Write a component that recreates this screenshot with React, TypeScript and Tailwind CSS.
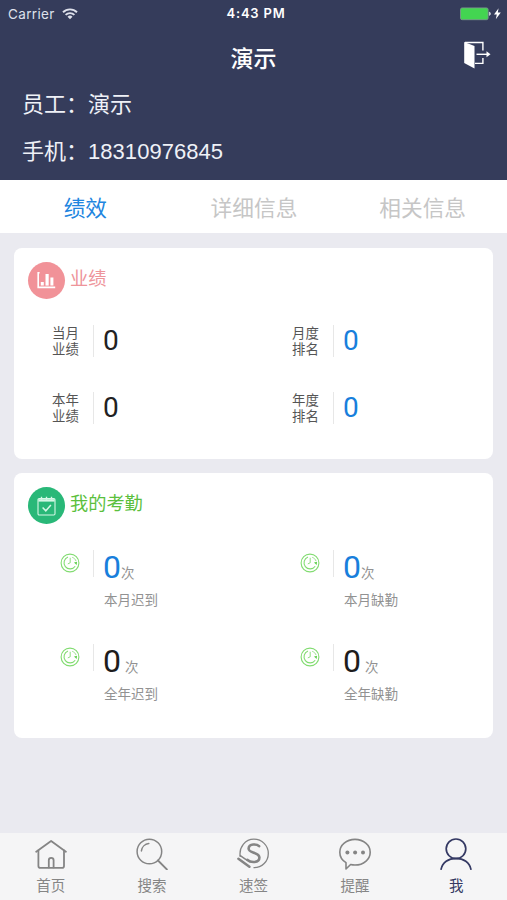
import type { ReactNode } from "react";
import clsx from "clsx";

const performance = [
  { label: ["当月", "业绩"], value: 0, highlight: false },
  { label: ["月度", "排名"], value: 0, highlight: true },
  { label: ["本年", "业绩"], value: 0, highlight: false },
  { label: ["年度", "排名"], value: 0, highlight: true },
];

const attendance = [
  { label: "本月迟到", value: 0, highlight: true },
  { label: "本月缺勤", value: 0, highlight: true },
  { label: "全年迟到", value: 0, highlight: false },
  { label: "全年缺勤", value: 0, highlight: false },
];

function WifiIcon() {
  return (
    <svg className="w-4 h-3" viewBox="0 0 16 12" fill="none" stroke="currentColor" strokeWidth={1.9}>
      <path d="M1 4.2a10 10 0 0 1 14 0" />
      <path d="M3.6 6.9a6.3 6.3 0 0 1 8.8 0" />
      <path d="M8 11.3 5.5 8.8a3.5 3.5 0 0 1 5 0z" fill="currentColor" stroke="none" />
    </svg>
  );
}

function BatteryIcon() {
  return (
    <svg className="w-[42px] h-[14px]" viewBox="0 0 42 14">
      <rect x="0.5" y="0.9" width="27.6" height="11.8" rx="1.6" fill="#43d551" stroke="#7f9a92" strokeWidth="0.8" />
      <path d="M29.3 5.1c1.6.3 1.6 3.1 0 3.4z" fill="#e5e8ef" stroke="#e5e8ef" strokeWidth="0.5" />
      <path d="M38.6 1.2 34 7.4h2.8l-1 4.8 5-6.6h-3z" fill="#fff" />
    </svg>
  );
}

function LogoutIcon() {
  return (
    <svg className="w-7 h-7" viewBox="0 0 28 28" fill="none" stroke="#fff" strokeWidth={1.4}>
      <path d="M1.2.9 11.5 5v22.5L1.2 22z" fill="#fff" stroke="none" />
      <path d="M2 1.5h17.9v8M19.9 17v5.4H12" />
      <path d="M13.5 13.3h12" />
      <path d="m23.5 10.3 4 3-4 3z" fill="#fff" stroke="none" />
    </svg>
  );
}

function ChartIcon() {
  return (
    <svg className="w-[19px] h-[17px]" viewBox="0 0 19 17" fill="none" stroke="#fff">
      <path d="M2.6.8H1.2v14.6h17" strokeWidth={1.6} />
      <path d="M5.3 10v3.6M14.9 5.5v8.1" strokeWidth={3} />
      <path d="M10.1 2v11.6" strokeWidth={3.2} />
    </svg>
  );
}

function CalendarIcon() {
  return (
    <svg className="w-[19px] h-[20px]" viewBox="0 0 19 20" fill="none" stroke="#d5f7e6" strokeWidth={1.1}>
      <rect x="1" y="2.6" width="17" height="16.4" rx="1.2" />
      <path d="M1.4 3.2h16.2v2.4H1.4z" fill="#d5f7e6" stroke="none" />
      <path d="M4.5.8v3M9.5.8v3M14.5.8v3" strokeWidth={1.4} />
      <path d="m5.6 11.5 3.2 3.3 5.1-5.7" strokeWidth={1.5} />
    </svg>
  );
}

function ClockIcon() {
  return (
    <svg className="w-5 h-5" viewBox="0 0 20 20" fill="none" stroke="#82dc71" strokeWidth={1.1}>
      <circle cx="10" cy="10" r="8.9" />
      <path d="M8 4.1a6.1 6.1 0 1 0 7.2 9.1" />
      <path d="M12.2 4.3c2 .8 3.3 2 3.8 3.7" strokeWidth={0.8} />
      <path d="M10.2 4.8v5l-2.4 1.1" strokeWidth={0.9} />
      <path d="m14 9.4 3-.7-.4 3.2z" fill="#62cf50" stroke="none" />
    </svg>
  );
}

function HomeIcon() {
  return (
    <svg className="w-8 h-8" viewBox="0 0 32 32" fill="none" stroke="currentColor" strokeWidth={1.8} strokeLinecap="round" strokeLinejoin="round">
      <path d="M1.2 13.7 16.1 3l14.8 10.7" />
      <path d="M3.4 12.4v15.5c0 1.2.7 1.9 1.9 1.9h21.8c1.2 0 1.9-.7 1.9-1.9V12.4" />
      <path d="M13.8 29.4v-7.2a2.4 2.4 0 0 1 4.8 0v7.2" />
    </svg>
  );
}

function SearchIcon() {
  return (
    <svg className="w-8 h-8" viewBox="0 0 32 32" fill="none" stroke="currentColor" strokeWidth={1.5} strokeLinecap="round">
      <circle cx="13.4" cy="13.5" r="12.3" />
      <path d="M5.4 12.9a8.2 8.2 0 0 1 7.4-7.3" />
      <path d="m22 22.5 8.9 9" strokeWidth={1.8} />
    </svg>
  );
}

function SignIcon() {
  return (
    <svg className="w-8 h-8" viewBox="0 0 32 32" fill="none" stroke="currentColor" strokeWidth={1.5} strokeLinecap="round">
      <path d="M3.2 18.4C1.8 9.2 8.2 1.2 17 1.2c8 0 14.3 6.3 14.3 14.2 0 8-6.3 14.3-14.3 14.3" strokeWidth={1.3} />
      <path d="M22.1 8.2C20 6 12 5.2 11.6 10.5c-.3 5 10.8 3.4 10.8 9 0 5.8-8.8 5.4-12.2 2.3" strokeWidth={2.6} />
      <path d="M3.3 17.6c3 2.4 6.6 4.7 10.1 6" strokeWidth={1.4} />
      <path d="m1.4 20.8 11 7.9" strokeWidth={2.5} />
    </svg>
  );
}

function MessageIcon() {
  return (
    <svg className="w-8 h-8" viewBox="0 0 32 32" fill="none" stroke="currentColor" strokeWidth={1.6} strokeLinejoin="round">
      <path d="M16 1.4c8.5 0 15.2 5.6 15.2 12.8S24.5 27 16 27c-1.5 0-3-.2-4.4-.5L7 31v-6.4C3.2 22.3.8 18.5.8 14.2.8 7 7.5 1.4 16 1.4z" />
      <g fill="currentColor" stroke="none">
        <circle cx="8.4" cy="14.5" r="2" />
        <circle cx="16.1" cy="14.5" r="2" />
        <circle cx="24" cy="14.5" r="2" />
      </g>
    </svg>
  );
}

function UserIcon() {
  return (
    <svg className="w-8 h-8" viewBox="0 0 32 32" fill="none" stroke="currentColor" strokeWidth={1.7} strokeLinecap="round">
      <circle cx="16" cy="10.8" r="9.8" />
      <path d="M1.1 31.2C2.4 24.5 8.3 20.4 16 20.4s13.6 4.1 14.9 10.8" />
    </svg>
  );
}

const navItems = [
  { label: "首页", icon: <HomeIcon /> },
  { label: "搜索", icon: <SearchIcon /> },
  { label: "速签", icon: <SignIcon /> },
  { label: "提醒", icon: <MessageIcon /> },
  { label: "我", icon: <UserIcon />, active: true },
];

function CardTitle({ icon, title, color, badge }: { icon: ReactNode; title: string; color: string; badge: string }) {
  return (
    <div className="flex h-[38px] gap-[5px]">
      <div className={clsx("flex w-[37px] h-[37px] mt-px rounded-full items-center justify-center", badge)}>
        {icon}
      </div>
      <h2 className={clsx("text-[18.2px] leading-[36px]", color)}>{title}</h2>
    </div>
  );
}

export default function App() {
  return (
    <div className="flex flex-col w-full h-[900px] overflow-hidden bg-[#eaeaf0] font-['Liberation_Sans','Noto_Sans_CJK_SC',sans-serif]">
      <header className="h-[180px] shrink-0 bg-[#353c5b] text-white">
        {/* Status bar */}
        <div className="grid grid-cols-3 items-center h-[28px] pl-2 pr-[5px] font-['Inter',sans-serif]">
          <div className="flex items-center gap-[7px] text-[13.5px] text-[#dee1eb]">
            <span className="tracking-[0.35px]">Carrier</span>
            <WifiIcon />
          </div>
          <div className="pl-0.5 text-center text-[13px] font-semibold tracking-[0.8px] whitespace-nowrap">4:43 PM</div>
          <div className="flex justify-end">
            <BatteryIcon />
          </div>
        </div>
        <div className="grid grid-cols-[1fr_auto_1fr] items-center h-[60px] pr-4">
          <h1 className="col-start-2 pl-4 pt-[2px] text-[23px] font-medium">演示</h1>
          <div className="flex justify-end pb-1.5">
            <LogoutIcon />
          </div>
        </div>
        <div className="pl-[22px] text-[22px] leading-[46px] text-[#eff1f7] -mt-[6px]">
          <div>员工：演示</div>
          <div className="mt-px">
            手机：<span className="tracking-[0.05px]">18310976845</span>
          </div>
        </div>
      </header>

      {/* Tabs */}
      <div className="grid grid-cols-3 h-[53px] shrink-0 bg-white pl-px text-center text-[21.7px] leading-[57px] text-[#c6c6c6]">
        <div className="text-[#2185df]">绩效</div>
        <div>详细信息</div>
        <div>相关信息</div>
      </div>

      <main className="flex-1 px-[14px] pt-[15px]">
        <section className="h-[211px] rounded-lg bg-white pl-[14px] pt-[13px]">
          <CardTitle icon={<ChartIcon />} title="业绩" color="text-[#ee949a]" badge="bg-[#f19298]" />
          <div className="grid grid-cols-[240px_1fr] auto-rows-[67px] mt-[24px] pl-6">
            {performance.map((item) => (
              <div key={item.label.join("")} className="flex h-8 mt-0.5">
                <div className="w-[41px] pt-px text-[13.4px] leading-4 text-[#555]">
                  {item.label[0]}
                  <br />
                  {item.label[1]}
                </div>
                <div
                  className={clsx(
                    "border-l border-[#e7e7e7] pl-[9px] font-['Roboto',sans-serif] text-[28px] leading-8",
                    item.highlight ? "text-[#187fdc]" : "text-[#222]"
                  )}
                >
                  {item.value}
                </div>
              </div>
            ))}
          </div>
        </section>

        <section className="h-[265px] mt-[14px] rounded-lg bg-white pl-[14px] pt-[13px]">
          <CardTitle icon={<CalendarIcon />} title="我的考勤" color="text-[#5bbf3d]" badge="bg-[#29b878]" />
          <div className="grid grid-cols-[240px_1fr] auto-rows-[94px] mt-[26px] pl-8">
            {attendance.map((item) => (
              <div key={item.label} className="flex">
                <div className="w-[33px] pt-[3px]">
                  <ClockIcon />
                </div>
                <div className="h-[27px] border-l border-[#e7e7e7]" />
                <div className="pl-[9px] text-[#929292]">
                  <div className="flex items-baseline h-[42px] leading-[34px]">
                    <span
                      className={clsx(
                        "font-['Roboto',sans-serif] text-[32px]",
                        item.highlight ? "text-[#187fdc]" : "text-[#1d1d1d] mr-[4px]"
                      )}
                    >
                      {item.value}
                    </span>
                    <span className="text-[13.5px]">次</span>
                  </div>
                  <div className="pl-px pt-px text-[13.5px] leading-4">{item.label}</div>
                </div>
              </div>
            ))}
          </div>
        </section>
      </main>

      <nav className="grid grid-cols-5 h-[67px] shrink-0 bg-[#f5f5f6] pt-[5px]">
        {navItems.map((item) => (
          <div
            key={item.label}
            className={clsx("flex flex-col items-center", item.active ? "text-[#343963]" : "text-[#858585]")}
          >
            {item.icon}
            <span className="mt-[6px] text-[14.5px] leading-5">{item.label}</span>
          </div>
        ))}
      </nav>
    </div>
  );
}
